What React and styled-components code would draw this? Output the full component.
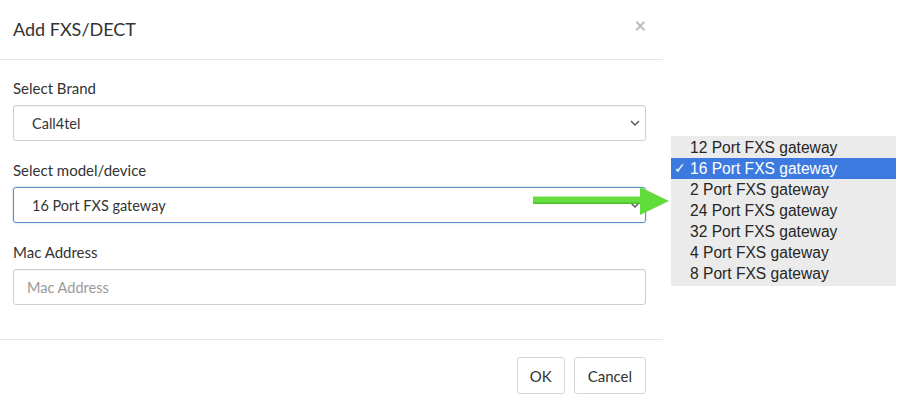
import * as React from 'react';
import styled, { createGlobalStyle } from 'styled-components';

const GlobalStyle = createGlobalStyle`
  html, body {
    margin: 0;
    padding: 0;
    background: #fff;
  }
  body {
    font-family: Lato, 'Open Sans', sans-serif;
    color: #333;
  }
`;

const Page = styled.div`
  position: relative;
  width: 900px;
  height: 405px;
  overflow: hidden;
`;

const Modal = styled.div`
  width: 663px;
  display: flex;
  flex-direction: column;
`;

const Header = styled.div`
  height: 59px;
  padding: 0 13px;
  display: flex;
  align-items: center;
  justify-content: space-between;
  border-bottom: 1px solid #e5e5e5;
`;

const Title = styled.h4`
  margin: 0;
  font-size: 18px;
  font-weight: 400;
  color: #333;
  padding-bottom: 2px;
`;

const Close = styled.span`
  font-size: 20px;
  font-weight: 700;
  color: #bdbdbd;
  margin-right: 4px;
  margin-bottom: 10px;
`;

const Body = styled.div`
  padding: 17px 17px 34px 13px;
  display: flex;
  flex-direction: column;
  gap: 18px;
  border-bottom: 1px solid #e5e5e5;
`;

const Group = styled.div`
  display: flex;
  flex-direction: column;
  gap: 6px;
`;

const Label = styled.label`
  font-size: 15px;
  line-height: 22px;
  color: #333;
`;

const Field = styled.div`
  height: 36px;
  box-sizing: border-box;
  border: 1px solid ${(p) => (p.focused ? '#5a8cc6' : '#cfcfcf')};
  border-radius: 3px;
  box-shadow: ${(p) =>
    p.focused ? '0 0 2px rgba(90, 140, 198, 0.5)' : 'inset 0 1px 1px rgba(0,0,0,0.04)'};
  display: flex;
  align-items: center;
  justify-content: space-between;
  padding: 0 4px 0 ${(p) => (p.select ? '18px' : '13px')};
  font-size: 14.5px;
  color: ${(p) => (p.placeholder ? '#999' : '#333')};
`;

const Chevron = () => (
  <svg width="12" height="8" viewBox="0 0 12 8">
    <path d="M2 2 L6 6 L10 2" fill="none" stroke="#555" strokeWidth="1.4" />
  </svg>
);

const Footer = styled.div`
  display: flex;
  justify-content: flex-end;
  gap: 9px;
  padding: 17px 17px 10px 13px;
`;

const Button = styled.button`
  height: 37px;
  box-sizing: border-box;
  background: #fff;
  border: 1px solid #d6d6d6;
  border-radius: 3px;
  font-family: Lato, 'Open Sans', sans-serif;
  font-size: 15px;
  color: #333;
  padding: 0 ${(p) => (p.wide ? '13px' : '12px')};
`;

const Dropdown = styled.ul`
  position: absolute;
  left: 671px;
  top: 136px;
  width: 225px;
  margin: 0;
  padding: 1px 0 2px 0;
  list-style: none;
  background: #ebebeb;
  font-family: 'Liberation Sans', Arial, sans-serif;
  font-size: 15.6px;
`;

const Option = styled.li`
  position: relative;
  height: 21px;
  line-height: 21px;
  padding-left: 19px;
  color: ${(p) => (p.selected ? '#fff' : '#262626')};
  background: ${(p) => (p.selected ? '#3d7ae0' : 'transparent')};
`;

const Check = styled.span`
  position: absolute;
  left: 3px;
  top: 0;
  font-size: 14px;
`;

const Arrow = styled.svg`
  position: absolute;
  left: 533px;
  top: 186px;
`;

const options = [
  '12 Port FXS gateway',
  '16 Port FXS gateway',
  '2 Port FXS gateway',
  '24 Port FXS gateway',
  '32 Port FXS gateway',
  '4 Port FXS gateway',
  '8 Port FXS gateway',
];

export default function App() {
  return (
    <Page>
      <GlobalStyle />
      <Modal>
        <Header>
          <Title>Add FXS/DECT</Title>
          <Close>×</Close>
        </Header>
        <Body>
          <Group>
            <Label>Select Brand</Label>
            <Field select>
              <span>Call4tel</span>
              <Chevron />
            </Field>
          </Group>
          <Group>
            <Label>Select model/device</Label>
            <Field select focused>
              <span>16 Port FXS gateway</span>
              <Chevron />
            </Field>
          </Group>
          <Group>
            <Label>Mac Address</Label>
            <Field placeholder>
              <span>Mac Address</span>
            </Field>
          </Group>
        </Body>
        <Footer>
          <Button>OK</Button>
          <Button wide>Cancel</Button>
        </Footer>
      </Modal>

      <Arrow width="137" height="30" viewBox="0 0 137 30">
        <rect x="0" y="11" width="110" height="7" fill="#4fbf2e" />
        <rect x="0" y="10.5" width="110" height="6" fill="#66de3f" />
        <polygon points="107,1 136,15 107,29" fill="#62dc3b" />
      </Arrow>

      <Dropdown>
        {options.map((o) => (
          <Option key={o} selected={o === '16 Port FXS gateway'}>
            {o === '16 Port FXS gateway' && <Check>✓</Check>}
            {o}
          </Option>
        ))}
      </Dropdown>
    </Page>
  );
}
